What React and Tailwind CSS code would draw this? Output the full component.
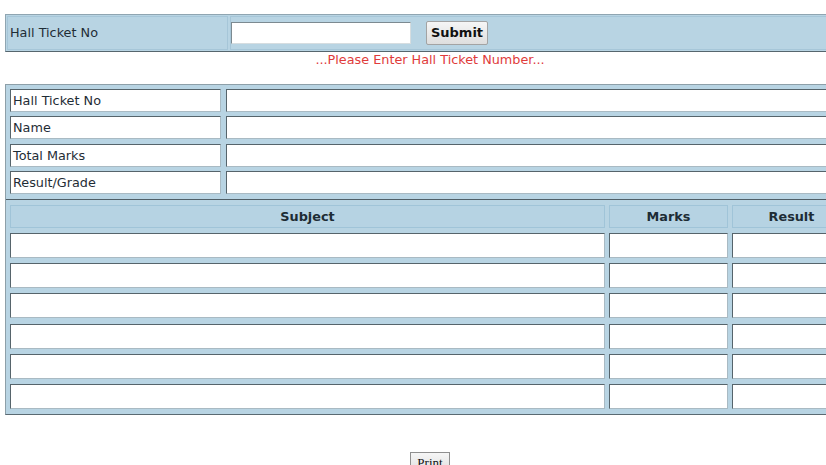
import React from 'react';

const labels = ['Hall Ticket No', 'Name', 'Total Marks', 'Result/Grade'];
const subjectRows = [0, 1, 2, 3, 4, 5];

const insetCell =
  'bg-white border border-t-[#56646b] border-l-[#56646b] border-b-[#a9bac3] border-r-[#a9bac3]';
const headCell =
  'h-[23px] bg-[#b6d3e3] border border-[#a0c4d8] flex items-center justify-center font-bold text-[#1d2c35]';

export default function App() {
  return (
    <div
      className="w-[826px] h-[465px] overflow-hidden bg-white text-[12.8px] text-[#1f2d36]"
      style={{ fontFamily: '"DejaVu Sans", Verdana, sans-serif' }}
    >
      <div className="ml-[5px] w-[850px] pt-[14px]">
        {/* search bar */}
        <div className="h-[38px] flex gap-[2px] p-[1px] bg-[#b8d4e3] border border-[#8fa5b1] border-b-[#56666e] border-r-[#56666e]">
          <div className="w-[221px] flex items-center pl-[2px] border border-[#a6c6d8]">
            Hall Ticket No
          </div>
          <div className="flex-1 flex items-center border border-[#a6c6d8]">
            <input
              type="text"
              className="w-[180px] h-[22px] bg-white border border-t-[#7c8a91] border-l-[#7c8a91] border-b-[#d6dde0] border-r-[#d6dde0] outline-none"
            />
            <button
              type="button"
              className="ml-[15px] w-[62px] h-[24px] bg-gradient-to-b from-[#f6f6f6] to-[#dedede] border border-[#a3a3a3] rounded-[2px] font-bold text-[13px] text-[#111]"
            >
              Submit
            </button>
          </div>
        </div>

        <div className="h-[32px] pt-[1px] leading-[14px] text-center text-[#e03b3b]">
          ...Please Enter Hall Ticket Number...
        </div>

        {/* result table */}
        <div className="bg-[#b8d4e3] border border-[#8d9fa8] border-b-[#5a6a72] border-r-[#5a6a72]">
          <div className="px-[4px] pt-[4px] pb-[5px] border-b border-b-[#4f5e66] flex flex-col gap-[4.3px]">
            {labels.map((l) => (
              <div key={l} className="flex gap-[5px] h-[23px]">
                <div className={`w-[211px] flex items-center pl-[2px] ${insetCell}`}>{l}</div>
                <div className={`flex-1 ${insetCell}`} />
              </div>
            ))}
          </div>

          <div className="pl-[4px] pt-[5px] pb-[5px] flex flex-col gap-[5.2px]">
            <div className="flex gap-[4px]">
              <div className={`w-[595px] ${headCell}`}>Subject</div>
              <div className={`w-[119px] ${headCell}`}>Marks</div>
              <div className={`w-[119px] ${headCell}`}>Result</div>
            </div>
            {subjectRows.map((r) => (
              <div key={r} className="flex gap-[4px] h-[25px]">
                <div className={`w-[595px] ${insetCell}`} />
                <div className={`w-[119px] ${insetCell}`} />
                <div className={`w-[119px] ${insetCell}`} />
              </div>
            ))}
          </div>
        </div>

        <div className="mt-[37px] flex justify-center">
          <button
            type="button"
            className="px-[6px] h-[22px] bg-gradient-to-b from-[#f6f6f6] to-[#dedede] border border-[#8f8f8f] text-[13px] text-[#111]"
            style={{ fontFamily: '"Liberation Serif", serif' }}
          >
            Print
          </button>
        </div>
      </div>
    </div>
  );
}
